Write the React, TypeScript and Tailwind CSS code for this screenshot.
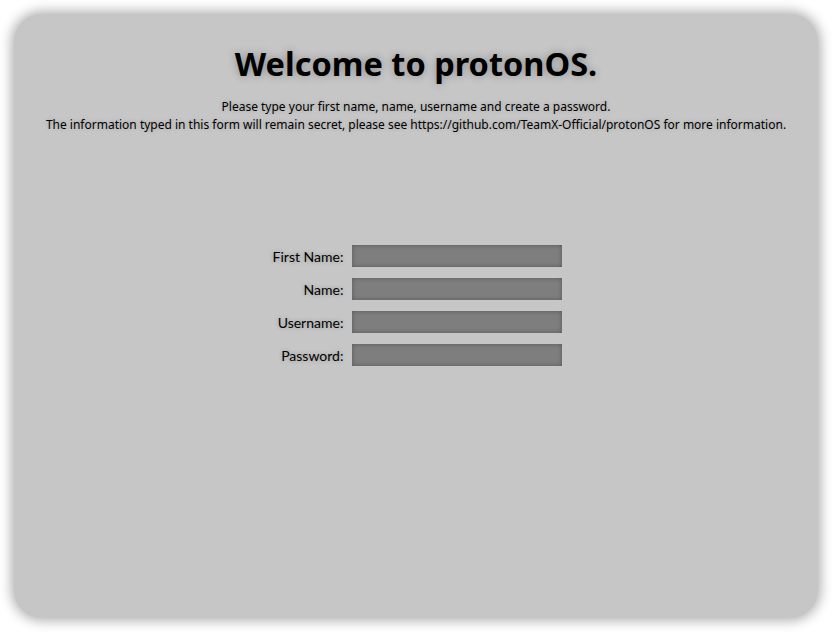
const fields = ["First Name:", "Name:", "Username:", "Password:"];

export default function App() {
  return (
    <div className="w-[832px] h-[632px] bg-white p-[14px]">
      <div className="h-full rounded-[28px] bg-[#c6c6c6] shadow-[0_0_12px_3px_rgba(0,0,0,0.3)] flex flex-col items-center pt-[28px] font-['Noto_Sans',sans-serif] text-black">
        <h1 className="text-[32.5px] leading-[44px] font-bold [text-shadow:0_0_8px_rgba(0,0,0,0.3)]">
          Welcome to protonOS.
        </h1>
        <p className="mt-[12px] text-[12px] leading-[18px] text-center [text-shadow:0_0_4px_rgba(0,0,0,0.2)]">
          Please type your first name, name, username and create a password.
          <br />
          The information typed in this form will remain secret, please see https://github.com/TeamX-Official/protonOS for more information.
        </p>
        <div className="mt-[111px] ml-[3px] grid grid-cols-[auto_210px] gap-x-[9px] gap-y-[11px] items-center font-['Lato',sans-serif]">
          {fields.map((f) => (
            <>
              <label key={f} className="text-right text-[14px] [text-shadow:0_0_4px_rgba(0,0,0,0.25)]">
                {f}
              </label>
              <input
                type={f === "Password:" ? "password" : "text"}
                className="w-[210px] h-[22px] bg-[#7e7e7e] outline-none shadow-[inset_0_0_5px_rgba(0,0,0,0.3)]"
              />
            </>
          ))}
        </div>
      </div>
    </div>
  );
}
